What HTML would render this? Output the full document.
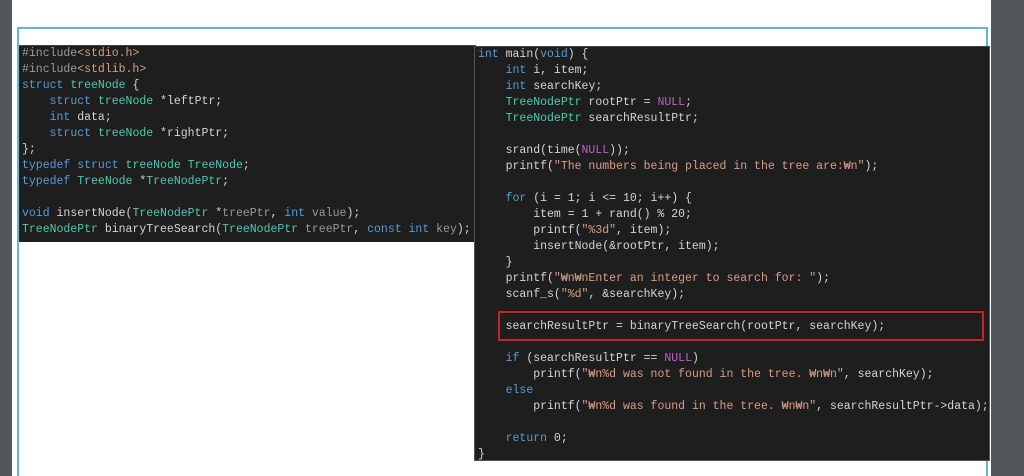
<!DOCTYPE html>
<html><head><meta charset="utf-8"><style>
html,body{margin:0;padding:0;width:1024px;height:476px;overflow:hidden;background:#fff;position:relative}
.gl{position:absolute;left:0;top:0;width:12px;height:476px;background:#53575b}
.gr{position:absolute;left:991px;top:0;width:33px;height:476px;background:#53575b}
.teal{position:absolute;left:17px;top:27px;width:967px;height:460px;border:2px solid #5bbcd3;border-bottom:none}
.code{position:absolute;background:#1e1e1e;color:#d4d4d4;font-family:"Liberation Mono",monospace;font-size:11.5px;line-height:16px;white-space:pre;padding:0 0 0 3px;box-sizing:border-box}
.l{left:19px;top:45px;width:457px;height:197px;border-top:1px solid #444}
.r{left:474px;top:46px;width:516px;height:415px;border:1px solid #555;border-top:1px solid #444;padding-left:3px}
.k{color:#569cd6}.t{color:#4ec9b0}.s{color:#d69d85}.m{color:#bd63c5}.p{color:#9a9a9a}.i{color:#9b9b9b}
.red{position:absolute;left:498px;top:311px;width:482px;height:26px;border:2px solid #c8232b}
</style></head><body>
<div class="gl"></div><div class="gr"></div>
<div class="teal"></div>
<div class="code l"><span class="i">#include</span><span class="s">&lt;stdio.h&gt;</span>
<span class="i">#include</span><span class="s">&lt;stdlib.h&gt;</span>
<span class="k">struct</span> <span class="t">treeNode</span> {
    <span class="k">struct</span> <span class="t">treeNode</span> *leftPtr;
    <span class="k">int</span> data;
    <span class="k">struct</span> <span class="t">treeNode</span> *rightPtr;
};
<span class="k">typedef</span> <span class="k">struct</span> <span class="t">treeNode</span> <span class="t">TreeNode</span>;
<span class="k">typedef</span> <span class="t">TreeNode</span> *<span class="t">TreeNodePtr</span>;

<span class="k">void</span> insertNode(<span class="t">TreeNodePtr</span> *<span class="p">treePtr</span>, <span class="k">int</span> <span class="p">value</span>);
<span class="t">TreeNodePtr</span> binaryTreeSearch(<span class="t">TreeNodePtr</span> <span class="p">treePtr</span>, <span class="k">const</span> <span class="k">int</span> <span class="p">key</span>);</div>
<div class="code r"><span class="k">int</span> main(<span class="k">void</span>) {
    <span class="k">int</span> i, item;
    <span class="k">int</span> searchKey;
    <span class="t">TreeNodePtr</span> rootPtr = <span class="m">NULL</span>;
    <span class="t">TreeNodePtr</span> searchResultPtr;

    srand(time(<span class="m">NULL</span>));
    printf(<span class="s">"The numbers being placed in the tree are:₩n"</span>);

    <span class="k">for</span> (i = 1; i &lt;= 10; i++) {
        item = 1 + rand() % 20;
        printf(<span class="s">"%3d"</span>, item);
        insertNode(&amp;rootPtr, item);
    }
    printf(<span class="s">"₩n₩nEnter an integer to search for: "</span>);
    scanf_s(<span class="s">"%d"</span>, &amp;searchKey);

    searchResultPtr = binaryTreeSearch(rootPtr, searchKey);

    <span class="k">if</span> (searchResultPtr == <span class="m">NULL</span>)
        printf(<span class="s">"₩n%d was not found in the tree. ₩n₩n"</span>, searchKey);
    <span class="k">else</span>
        printf(<span class="s">"₩n%d was found in the tree. ₩n₩n"</span>, searchResultPtr-&gt;data);

    <span class="k">return</span> 0;
}</div>
<div class="red"></div>
</body></html>
